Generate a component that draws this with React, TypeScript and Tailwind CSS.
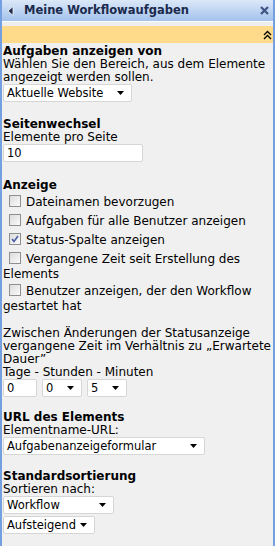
import React from 'react';

const Box: React.FC<{ checked?: boolean }> = ({ checked }) => (
  <span className="inline-block align-middle w-[12px] h-[12px] ml-[6px] mr-[5px] my-[3px] border border-[#8e8f8f] bg-gradient-to-br from-[#dcdcdc] to-[#fbfbfb] relative -top-[1px]">
    {checked && (
      <svg viewBox="0 0 10 10" className="absolute inset-0 w-[10px] h-[10px]">
        <path d="M2 5 L4 7.5 L8 2" fill="none" stroke="#4a5ea8" strokeWidth="1.6" />
      </svg>
    )}
  </span>
);

const Select: React.FC<{ value: string; w: string }> = ({ value, w }) => (
  <div className={`${w} h-[18px] bg-white border border-[#d6d6d6] rounded-[2px] flex items-center justify-between pl-[3px] pr-[7px] text-[11.5px]`}>
    <span>{value}</span>
    <svg width="7" height="4" viewBox="0 0 7 4">
      <path d="M0 0 H7 L3.5 4 Z" fill="#000" />
    </svg>
  </div>
);

const Row: React.FC<{ checked?: boolean; children: React.ReactNode }> = ({ checked, children }) => (
  <div className="leading-[13px] py-[0.5px]">
    <Box checked={checked} />
    {children}
  </div>
);

export default function App() {
  return (
    <div
      className="w-[275px] h-[546px] bg-[#f0f0f0] border-l-2 border-r-2 border-[#74a0e2] flex flex-col text-[12px] leading-[13px] text-black overflow-hidden"
      style={{ fontFamily: '"DejaVu Sans", Verdana, sans-serif' }}
    >
      <div className="h-[21px] bg-gradient-to-b from-[#dce8f8] to-[#a3c2ec] flex items-center pl-[5px] pr-[4px]">
        <svg width="8" height="10" viewBox="0 0 8 10" className="mr-[9px]">
          <path d="M6 0.5 L6 9.5 L1 5 Z" fill="#1d2a4a" stroke="#fff" strokeWidth="0.8" />
        </svg>
        <span className="font-bold text-[11.5px] text-[#1b2a4c] flex-1">Meine Workflowaufgaben</span>
        <svg width="9" height="9" viewBox="0 0 9 9">
          <path d="M1 1 L8 8 M8 1 L1 8" stroke="#3e5486" strokeWidth="2.2" />
        </svg>
      </div>
      <div className="h-[5px] bg-[#eeeeee] border-t border-white" />
      <div className="h-[17px] bg-[#fedb8b] flex items-center justify-end pr-[1px]">
        <svg width="9" height="10" viewBox="0 0 9 10">
          <path d="M1 5 L4.5 1.5 L8 5 M1 9 L4.5 5.5 L8 9" fill="none" stroke="#000" strokeWidth="1.3" />
        </svg>
      </div>

      <div className="pl-[1px] pt-[2px]">
        <div className="font-bold">Aufgaben anzeigen von</div>
        <div>Wählen Sie den Bereich, aus dem Elemente angezeigt werden sollen.</div>
        <Select value="Aktuelle Website" w="w-[129px]" />

        <div className="font-bold mt-[16px]">Seitenwechsel</div>
        <div>Elemente pro Seite</div>
        <div className="w-[140px] h-[18px] bg-white border border-[#d6d6d6] rounded-[2px] flex items-center pl-[3px] text-[11.5px]">10</div>

        <div className="font-bold mt-[17px]">Anzeige</div>
        <Row>Dateinamen bevorzugen</Row>
        <Row>Aufgaben für alle Benutzer anzeigen</Row>
        <Row checked>Status-Spalte anzeigen</Row>
        <Row>Vergangene Zeit seit Erstellung des Elements</Row>
        <Row>Benutzer anzeigen, der den Workflow gestartet hat</Row>

        <div className="mt-[14px]">
          Zwischen Änderungen der Statusanzeige vergangene Zeit im Verhältnis zu „Erwartete Dauer”
        </div>
        <div>Tage - Stunden - Minuten</div>
        <div className="flex gap-[5px]">
          <div className="w-[34px] h-[18px] bg-white border border-[#d6d6d6] rounded-[2px] flex items-center pl-[3px] text-[11.5px]">0</div>
          <Select value="0" w="w-[40px]" />
          <Select value="5" w="w-[40px]" />
        </div>

        <div className="font-bold mt-[14px]">URL des Elements</div>
        <div>Elementname-URL:</div>
        <Select value="Aufgabenanzeigeformular" w="w-[202px]" />

        <div className="font-bold mt-[15px]">Standardsortierung</div>
        <div>Sortieren nach:</div>
        <Select value="Workflow" w="w-[111px]" />
        <div className="mt-[2px]">
          <Select value="Aufsteigend" w="w-[92px]" />
        </div>
      </div>
    </div>
  );
}
